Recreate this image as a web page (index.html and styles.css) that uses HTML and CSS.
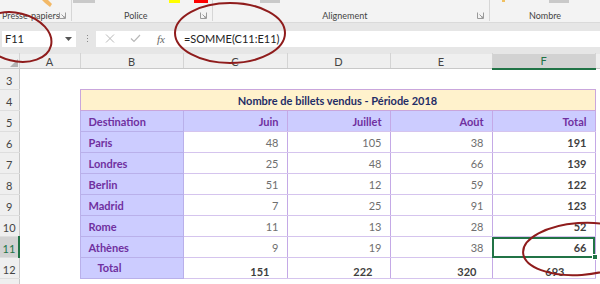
FILE: index.html
```html
<!DOCTYPE html>
<html lang="fr">
<head>
  <meta charset="UTF-8">
  <meta name="viewport" content="width=device-width, initial-scale=1.0">
  <title>Nombre de billets vendus</title>
  <link rel="stylesheet" href="styles.css">
</head>
<body>
  <!-- ribbon, only the bottom edge of the groups is visible -->
  <div class="ribbon">
    <div class="group g-clip">
      <div class="icons">
        <svg class="brush" width="10" height="7" viewBox="0 0 10 7"><polygon points="0,0 6,0 10,4 8,7 3,3" fill="#f2b866"/></svg>
      </div>
      <div class="label-row"><span class="label">Presse-papiers</span><span class="launcher"><svg width="7" height="7" viewBox="0 0 7 7"><path d="M0.5 0.5V6.5H6.5V0.5M2.5 2.5L6 6M4 6H6V4" fill="none" stroke="#9a9a9a" stroke-width="1"/></svg></span></div>
    </div>
    <div class="group g-font">
      <div class="icons">
        <span class="swatch combo"></span>
        <span class="swatch yellow"></span>
        <span class="swatch red"></span>
      </div>
      <div class="label-row"><span class="label">Police</span><span class="launcher"><svg width="7" height="7" viewBox="0 0 7 7"><path d="M0.5 0.5V6.5H6.5V0.5M2.5 2.5L6 6M4 6H6V4" fill="none" stroke="#9a9a9a" stroke-width="1"/></svg></span></div>
    </div>
    <div class="group g-align">
      <div class="icons">
        <span class="swatch combo short"></span>
      </div>
      <div class="label-row"><span class="label">Alignement</span><span class="launcher"><svg width="7" height="7" viewBox="0 0 7 7"><path d="M0.5 0.5V6.5H6.5V0.5M2.5 2.5L6 6M4 6H6V4" fill="none" stroke="#9a9a9a" stroke-width="1"/></svg></span></div>
    </div>
    <div class="group g-number">
      <div class="icons">
        <span class="swatch dot"></span>
        <span class="swatch combo short"></span>
      </div>
      <div class="label-row"><span class="label">Nombre</span></div>
    </div>
  </div>

  <!-- name box + formula bar -->
  <div class="formula-row">
    <div class="name-box">
      <span>F11</span>
      <svg class="drop" width="7" height="4" viewBox="0 0 7 4"><polygon points="0,0 7,0 3.5,4" fill="#555"/></svg>
    </div>
    <div class="grip"><i></i><i></i><i></i></div>
    <div class="formula-bar">
      <svg class="fb-btn" width="10" height="9" viewBox="0 0 10 9"><path d="M1 0.5L9 8.5M9 0.5L1 8.5" stroke="#b8b8b8" stroke-width="1"/></svg>
      <svg class="fb-btn" width="11" height="9" viewBox="0 0 11 9"><path d="M1 4.5L4 7.5L10 1" fill="none" stroke="#b8b8b8" stroke-width="1.2"/></svg>
      <span class="fx">fx</span>
      <span class="formula">=SOMME(C11:E11)</span>
    </div>
  </div>

  <table class="sheet">
    <colgroup>
      <col class="c-hd"><col class="c-a"><col class="c-b"><col class="c-c">
      <col class="c-d"><col class="c-e"><col class="c-f"><col class="c-g">
    </colgroup>
    <thead>
      <tr>
        <th class="corner"><span class="tri"></span></th>
        <th>A</th><th>B</th><th>C</th><th>D</th><th>E</th><th class="sel">F</th><th></th>
      </tr>
    </thead>
    <tbody>
      <tr><th>3</th><td></td><td></td><td></td><td></td><td></td><td></td><td></td></tr>
      <tr>
        <th>4</th><td></td>
        <td colspan="5" class="title">Nombre de billets vendus - Période 2018</td>
        <td></td>
      </tr>
      <tr class="head">
        <th>5</th><td></td>
        <td class="lav">Destination</td>
        <td class="lav num">Juin</td><td class="lav num">Juillet</td><td class="lav num">Août</td><td class="lav num">Total</td>
        <td></td>
      </tr>
      <tr><th>6</th><td></td><td class="lav">Paris</td><td class="num">48</td><td class="num">105</td><td class="num">38</td><td class="num tot">191</td><td></td></tr>
      <tr><th>7</th><td></td><td class="lav">Londres</td><td class="num">25</td><td class="num">48</td><td class="num">66</td><td class="num tot">139</td><td></td></tr>
      <tr><th>8</th><td></td><td class="lav">Berlin</td><td class="num">51</td><td class="num">12</td><td class="num">59</td><td class="num tot">122</td><td></td></tr>
      <tr><th>9</th><td></td><td class="lav">Madrid</td><td class="num">7</td><td class="num">25</td><td class="num">91</td><td class="num tot">123</td><td></td></tr>
      <tr><th>10</th><td></td><td class="lav">Rome</td><td class="num">11</td><td class="num">13</td><td class="num">28</td><td class="num tot">52</td><td></td></tr>
      <tr><th class="sel">11</th><td></td><td class="lav">Athènes</td><td class="num">9</td><td class="num">19</td><td class="num">38</td><td class="num tot active">66</td><td></td></tr>
      <tr class="sum">
        <th>12</th><td></td>
        <td class="lav indent">Total</td>
        <td class="num tot">151</td><td class="num tot">222</td><td class="num tot pad-e">320</td><td class="num tot pad-f">693</td>
        <td></td>
      </tr>
      <tr><th></th><td></td><td></td><td></td><td></td><td></td><td></td><td></td></tr>
    </tbody>
  </table>

  <!-- hand-drawn circles on top of the sheet -->
  <svg class="marks" width="600" height="284" viewBox="0 0 600 284">
    <ellipse cx="16" cy="37" rx="36" ry="24" transform="rotate(14 16 37)"/>
    <ellipse cx="230" cy="33" rx="55" ry="30"/>
    <ellipse cx="580" cy="249" rx="57" ry="26" transform="rotate(-4 580 249)"/>
  </svg>
</body>
</html>
```

FILE: styles.css
```css
body {
  margin: 0;
  width: 600px;
  height: 284px;
  overflow: hidden;
  position: relative;
  background: #fff;
  font-family: Lato, "Liberation Sans", sans-serif;
}

/* ---------- ribbon ---------- */
.ribbon {
  display: flex;
  height: 23px;
  padding-bottom: 1px;
  box-sizing: border-box;
  background: #f3f3f3;
  border-bottom: 1px solid #dadada;
}

.group {
  display: flex;
  flex-direction: column;
  border-right: 1px solid #d6d6d6;
  box-sizing: border-box;
}

.g-clip { width: 72px; }
.g-font { width: 146px; }
.g-align { width: 288px; }
.g-number { flex: 1; border-right: none; }

.icons {
  display: flex;
  align-items: flex-start;
  height: 10px;
}

.brush { margin-left: 42px; }

.swatch {
  display: block;
  height: 3px;
}

.combo { width: 22px; background: #c9c9c9; margin-left: 1px; }
.combo.short { width: 20px; }
.yellow { width: 11px; background: #ffff00; margin-left: 74px; }
.red { width: 14px; background: #ff0000; margin-left: 14px; }
.g-align .combo { margin-left: 47px; }
.dot { width: 3px; height: 2px; background: #f0c060; margin-left: 12px; }
.g-number .combo { margin-left: 44px; }

.label-row {
  display: flex;
  align-items: center;
  height: 12px;
}

.label {
  flex: 1;
  min-width: 0;
  text-align: center;
  font-size: 9px;
  color: #444;
  white-space: nowrap;
}

.g-clip .label {
  text-align: left;
  padding-left: 2px;
}

.launcher {
  display: flex;
  width: 7px;
  margin-right: 5px;
}

.g-number .label {
  flex: none;
  width: 110px;
}

/* ---------- formula bar ---------- */
.formula-row {
  display: flex;
  align-items: center;
  height: 30px;
  background: #e6e6e6;
  padding-top: 1px;
  box-sizing: border-box;
}

.name-box {
  display: flex;
  align-items: center;
  justify-content: space-between;
  width: 74px;
  height: 16px;
  margin-left: 2px;
  padding: 0 4px 0 3px;
  box-sizing: border-box;
  background: #fff;
  font-size: 11px;
  color: #222;
}

.grip {
  display: flex;
  flex-direction: column;
  gap: 2px;
  margin: 0 8px 0 11px;
}

.grip i {
  display: block;
  width: 1px;
  height: 1px;
  background: #8a8a8a;
}

.formula-bar {
  display: flex;
  align-items: center;
  flex: 1;
  height: 16px;
  background: #fff;
  padding-left: 9px;
}

.fb-btn { margin-right: 15px; }

.fx {
  font-family: "Liberation Serif", serif;
  font-style: italic;
  font-size: 11px;
  color: #666;
  margin-left: 1px;
}

.formula {
  margin-left: 19px;
  font-size: 11px;
  color: #222;
}

/* ---------- sheet ---------- */
.sheet {
  width: 600px;
  table-layout: fixed;
  border-collapse: collapse;
  font-size: 11px;
}

.c-hd { width: 19px; }
.c-a { width: 61px; }
.c-b { width: 103px; }
.c-c { width: 104px; }
.c-d { width: 103px; }
.c-e { width: 102px; }
.c-f { width: 103px; }
.c-g { width: 5px; }

.sheet th {
  background: #efefef;
  color: #444;
  font-weight: normal;
  padding: 0;
  text-align: center;
}

.sheet thead tr { height: 15px; }

.sheet thead th {
  border-right: 1px solid #d4d4d4;
  border-bottom: 1px solid #c8c8c8;
  border-top: 1px solid #e6e6e6;
}

.sheet thead th.sel {
  background: #d2d2d2;
  color: #217346;
  border-bottom: 2px solid #217346;
}

.corner { position: relative; }

.tri {
  position: absolute;
  right: 1px;
  bottom: 1px;
  width: 0;
  height: 0;
  border-left: 8px solid transparent;
  border-bottom: 8px solid #b4b4b4;
}

.sheet tbody tr { height: 21px; }

/* row numbers sit a little low, like Excel's */
.sheet tbody th {
  vertical-align: bottom;
  padding-bottom: 2px;
  line-height: 13px;
  border-right: 1px solid #c8c8c8;
  border-bottom: 1px solid #dedede;
}

.sheet tbody th.sel {
  background: #d2d2d2;
  color: #217346;
  border-right: 2px solid #217346;
}

.sheet td {
  padding: 0;
  white-space: nowrap;
  overflow: hidden;
}

/* table body */
.title {
  background: #fff2cc;
  color: #1f2d66;
  font-weight: bold;
  text-align: center;
  border: 1px solid #c9a6dc;
}

.lav {
  background: #ccccff;
  color: #7030a0;
  font-weight: bold;
  padding-left: 8px !important;
  border: 1px solid #b9b0ea;
}

.num {
  text-align: right;
  color: #6f6f6f;
  padding-right: 8px !important;
  border: 1px solid #d5c4ee;
  border-left-color: #c4a9e6;
  border-right-color: #c4a9e6;
}

.head .num { color: #7030a0; }

.tot {
  font-weight: bold;
  color: #3f3f3f;
}

.active {
  position: relative;
  overflow: visible !important;
  outline: 2px solid #217346;
  outline-offset: -2px;
}

.active::after {
  content: "";
  position: absolute;
  right: -3px;
  bottom: -3px;
  width: 4px;
  height: 4px;
  background: #217346;
  border: 1px solid #fff;
}

.sum .tot {
  vertical-align: bottom;
  padding-right: 17px !important;
  line-height: 13px;
}

.sum .pad-e { padding-right: 15px !important; }
.sum .pad-f { padding-right: 30px !important; }

.sum .indent {
  padding-left: 17px !important;
  vertical-align: top;
  padding-top: 3px;
}

/* ---------- annotations ---------- */
.marks {
  position: absolute;
  top: 0;
  left: 0;
  pointer-events: none;
}

.marks ellipse {
  fill: none;
  stroke: #8f1c1c;
  stroke-width: 2;
}
```
